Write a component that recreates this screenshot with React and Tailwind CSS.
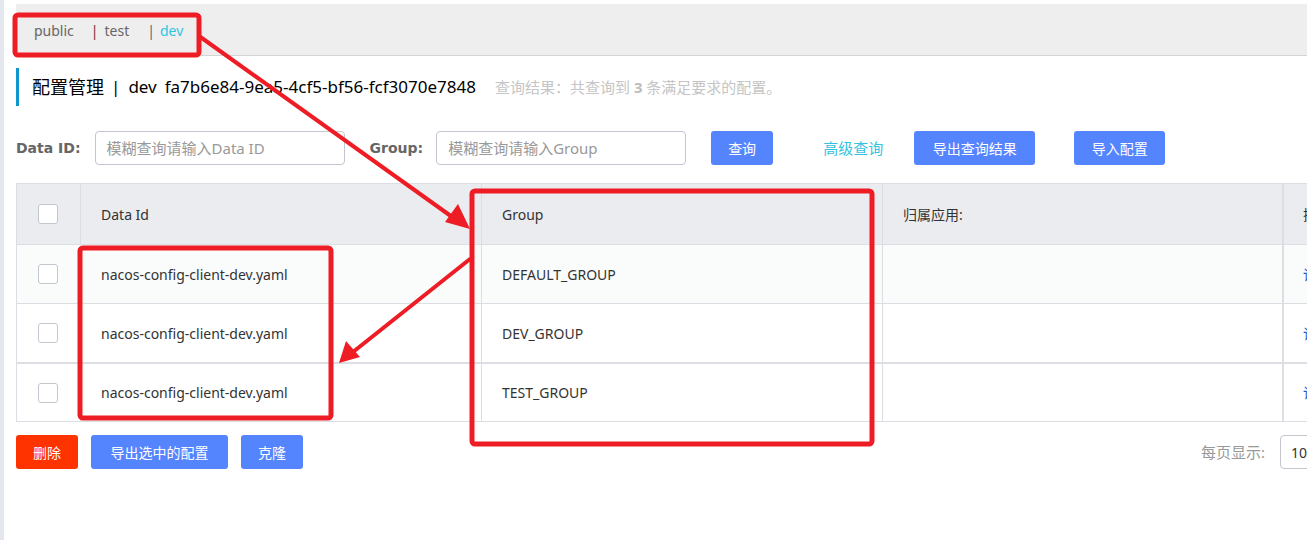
const font = { fontFamily: '"Noto Sans", "Noto Sans CJK SC", sans-serif' };
const labelFont = { fontFamily: '"DejaVu Sans", sans-serif' };

const rows = [
    { dataId: "nacos-config-client-dev.yaml", group: "DEFAULT_GROUP", bg: "bg-[#fafbfb]" },
    { dataId: "nacos-config-client-dev.yaml", group: "DEV_GROUP", bg: "bg-white" },
    { dataId: "nacos-config-client-dev.yaml", group: "TEST_GROUP", bg: "bg-white" },
];

const BlueButton = ({ children, className = "" }) => (
    <button className={`h-[34px] rounded-[3px] bg-[#5584ff] text-[14px] text-white ${className}`}>{children}</button>
);

const Checkbox = () => <span className="block h-[20px] w-[20px] rounded-[3px] border border-[#c4c6cf] bg-white" />;

// red marks drawn over the screenshot
const Annotations = () => (
    <svg className="pointer-events-none absolute left-0 top-0" width="1307" height="540" viewBox="0 0 1307 540">
        <g fill="none" stroke="#ee1c25" strokeWidth="5" strokeLinejoin="round">
            <rect x="15" y="15" width="184" height="40" rx="3" />
            <rect x="472" y="191" width="400" height="253" rx="3" />
            <rect x="80" y="248" width="251" height="170" rx="3" />
        </g>
        <g stroke="#ee1c25" strokeWidth="4" strokeLinecap="round">
            <line x1="199" y1="36" x2="455" y2="219" />
            <line x1="470" y1="259" x2="353" y2="352" />
        </g>
        <g fill="#ee1c25">
            <polygon points="470,229 445,222 458,204" />
            <polygon points="339,363 346,341 360,357" />
        </g>
    </svg>
);

export default function App() {
    return (
        <div className="relative flex h-[540px] w-[1307px] overflow-hidden bg-white text-[#333]" style={font}>
            <div className="w-[4px] shrink-0 bg-[#e4e8ee]" />
            <div className="ml-[12px] w-[1340px] shrink-0">
                {/* namespace tabs */}
                <div className="mt-[4px] flex h-[52px] items-center border-b border-[#d4d4d4] bg-[#eeeeee] pl-[18px] pt-[2px] text-[14px]">
                    <span className="text-[#666]">public</span>
                    <span className="ml-[17px] text-[#7a3030]">|</span>
                    <span className="ml-[6px] text-[#666]">test</span>
                    <span className="ml-[18px] text-[#55667a]">|</span>
                    <span className="ml-[5px] text-[#2ec5e0]">dev</span>
                </div>

                {/* page title */}
                <div className="mt-[12px] flex h-[38px] items-center border-l-[3px] border-[#0e97cc] pl-[13px] text-[17px] text-black">
                    <span className="text-[18px]">配置管理</span>
                    <span className="ml-[7px]">|</span>
                    <span className="ml-[8px]">dev</span>
                    <span className="ml-[8px]">fa7b6e84-9ea5-4cf5-bf56-fcf3070e7848</span>
                    <span className="ml-[19px] text-[15px] text-[#c5c5c5]">
                        查询结果：共查询到 <b className="font-bold text-[#bdbdbd]">3</b> 条满足要求的配置。
                    </span>
                </div>

                {/* search bar */}
                <div className="mt-[25px] flex h-[34px] items-center">
                    <span className="text-[14px] font-bold text-[#666]" style={labelFont}>
                        Data ID:
                    </span>
                    <div className="ml-[14px] flex h-[34px] w-[250px] items-center rounded-[4px] border border-[#c4c6cf] pl-[11px] text-[15px] text-[#999]">
                        模糊查询请输入Data ID
                    </div>
                    <span className="ml-[25px] text-[14px] font-bold text-[#666]" style={labelFont}>
                        Group:
                    </span>
                    <div className="ml-[13px] flex h-[34px] w-[250px] items-center rounded-[4px] border border-[#c4c6cf] pl-[11px] text-[15px] text-[#999]">
                        模糊查询请输入Group
                    </div>
                    <BlueButton className="ml-[25px] w-[62px]">查询</BlueButton>
                    <span className="ml-[50px] text-[15px] text-[#33c3e0]">高级查询</span>
                    <BlueButton className="ml-[31px] w-[121px]">导出查询结果</BlueButton>
                    <BlueButton className="ml-[39px] w-[91px]">导入配置</BlueButton>
                </div>

                {/* config table */}
                <div className="mt-[18px] border-y border-l border-[#dcdee3] text-[14px]">
                    <div className="grid h-[60px] grid-cols-[64px_401px_401px_401px_200px] bg-[#ebecf0]">
                        <div className="flex items-center border-r border-[#dcdee3] pl-[21px]">
                            <Checkbox />
                        </div>
                        <div className="flex items-center border-r border-[#dcdee3] pl-[20px]">Data Id</div>
                        <div className="flex items-center border-r border-[#dcdee3] pl-[20px]">Group</div>
                        <div className="flex items-center border-r-2 border-[#dcdee3] pl-[20px]">归属应用:</div>
                        <div className="flex items-center pl-[19px]">操作</div>
                    </div>
                    {rows.map((row, i) => (
                        <div
                            key={row.group}
                            className={`grid h-[59px] grid-cols-[64px_401px_401px_401px_200px] border-t border-[#dcdee3] ${row.bg} ${i === 2 ? "border-t-2" : ""}`}
                        >
                            <div className="flex items-center border-r border-[#dcdee3] pl-[21px]">
                                <Checkbox />
                            </div>
                            <div className="flex items-center border-r border-[#dcdee3] pl-[20px]">{row.dataId}</div>
                            <div className="flex items-center border-r border-[#dcdee3] pl-[20px]">{row.group}</div>
                            <div className="border-r-2 border-[#dcdee3]" />
                            <div className="flex items-center pl-[19px] text-[#2255cc]">详情</div>
                        </div>
                    ))}
                </div>

                {/* bottom actions */}
                <div className="mt-[13px] flex h-[34px] items-center">
                    <button className="h-[34px] w-[62px] rounded-[3px] bg-[#ff3300] text-[14px] text-white">删除</button>
                    <BlueButton className="ml-[13px] w-[137px]">导出选中的配置</BlueButton>
                    <BlueButton className="ml-[13px] w-[62px]">克隆</BlueButton>
                    <div className="ml-auto flex items-center">
                        <span className="text-[15px] text-[#999]">每页显示:</span>
                        <div className="ml-[15px] flex h-[34px] w-[76px] items-center rounded-[4px] border border-[#c4c6cf] pl-[10px] text-[14px] text-[#333]">
                            10
                        </div>
                    </div>
                </div>
            </div>
            <Annotations />
        </div>
    );
}
